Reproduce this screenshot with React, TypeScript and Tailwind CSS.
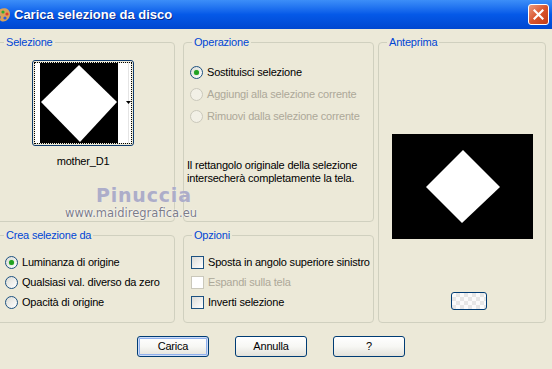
import React from "react";

type Opt = { checked?: boolean; disabled?: boolean };

function Radio({ checked, disabled }: Opt) {
  return (
    <span
      className={`flex h-[13px] w-[13px] shrink-0 items-center justify-center rounded-full border ${
        disabled ? "border-[#CAC8BB] bg-[#F2F0E6]" : "border-[#1C5180] bg-gradient-to-br from-[#DCDCD6] to-white"
      }`}
    >
      {checked && <span className="h-[5px] w-[5px] rounded-full bg-[#21A121] shadow-[0_0_1px_#5FCB5F]" />}
    </span>
  );
}

function Check({ disabled }: Opt) {
  return (
    <span
      className={`h-[13px] w-[13px] shrink-0 border ${
        disabled ? "border-[#CAC8BB] bg-white" : "border-[#1C5180] bg-gradient-to-br from-[#DCDCD7] to-white"
      }`}
    />
  );
}

function Group({ title, className, children }: { title: string; className: string; children: React.ReactNode }) {
  return (
    <fieldset className={`rounded-[4px] border border-[#D0D0BF] ${className}`}>
      <legend className="ml-[8px] px-[2px] text-[11px] leading-[13px] text-[#0046D5]">{title}</legend>
      {children}
    </fieldset>
  );
}

function Btn({ label, main }: { label: string; main?: boolean }) {
  return (
    <button
      type="button"
      className={`flex h-[21px] w-[72px] items-center justify-center rounded-[3px] border border-[#003C74] bg-gradient-to-b from-white via-[#F7F7F4] to-[#E3E2DA] text-[11px] text-black ${
        main ? "shadow-[inset_0_0_0_1px_#CEDCF7,inset_0_0_0_2px_#90B0EC]" : ""
      }`}
    >
      {label}
    </button>
  );
}

export default function App() {
  return (
    <div className="relative h-[369px] w-[552px] overflow-hidden bg-[#ECE9D8] font-['Liberation_Sans',Arial,sans-serif] text-[11px] tracking-[-0.2px] text-black">
      {/* title bar */}
      <div className="flex h-[29px] items-center bg-gradient-to-b from-[#3C8EF8] via-[#0559E8] to-[#0047D0]">
        <svg width="14" height="18" viewBox="0 0 14 18" className="ml-[-3px] shrink-0">
          <path d="M2 4 C6 1 13 2 13 8 C13 13 8 17 4 15 C1 13 6 11 2 9 Z" fill="#D9A25A" />
          <circle cx="6" cy="6" r="1.6" fill="#2FA82F" />
          <circle cx="10" cy="8" r="1.6" fill="#E13B2A" />
          <circle cx="8" cy="12" r="1.6" fill="#2A5BE0" />
        </svg>
        <div className="ml-[3px] text-[13px] font-bold tracking-[0px] text-white [text-shadow:1px_1px_0_#0A2A8A]">
          Carica selezione da disco
        </div>
        <div className="ml-auto mr-[3px] flex h-[21px] w-[21px] items-center justify-center rounded-[3px] border border-white bg-gradient-to-br from-[#E99A7E] via-[#D9542C] to-[#C23C16]">
          <svg width="11" height="11" viewBox="0 0 11 11">
            <path d="M1.5 1.5 L9.5 9.5 M9.5 1.5 L1.5 9.5" stroke="white" strokeWidth="2.2" strokeLinecap="square" />
          </svg>
        </div>
      </div>

      {/* groups */}
      <div className="ml-[-5px] mt-[7px] flex">
        <div className="flex w-[180px] flex-col gap-[7px]">
          <Group title="Selezione" className="h-[186px]">
            <div className="ml-[36px] mt-[11px] flex w-[102px] flex-col items-center">
              <div className="h-[86px] w-[102px] rounded-[3px] border border-[#0E3B6E] p-[1px]">
                <div className="h-full w-full border border-dotted border-black">
                  <svg width="96" height="80" viewBox="0 0 96 80" className="block">
                    <rect width="96" height="80" fill="white" />
                    <rect x="5" y="0" width="78" height="80" fill="black" />
                    <polygon points="44,2 82,39 45,79 6,39" fill="white" />
                    <line x1="93.5" y1="0" x2="93.5" y2="80" stroke="#E4E4E4" />
                    <polygon points="91,38 96,38 93.5,41" fill="black" />
                  </svg>
                </div>
              </div>
              <div className="mt-[9px] leading-[13px]">mother_D1</div>
            </div>
          </Group>
          <Group title="Crea selezione da" className="h-[94px]">
            <div className="flex flex-col pl-[9px] pt-[10px]">
              {["Luminanza di origine", "Qualsiasi val. diverso da zero", "Opacità di origine"].map((t, i) => (
                <div key={t} className="flex h-[20px] items-center gap-[4px] whitespace-nowrap">
                  <Radio checked={i === 0} />
                  <span>{t}</span>
                </div>
              ))}
            </div>
          </Group>
        </div>

        <div className="ml-[8px] flex w-[191px] flex-col gap-[7px]">
          <Group title="Operazione" className="h-[186px]">
            <div className="flex flex-col pl-[6px] pt-[12px]">
              <div className="flex h-[22px] items-center gap-[4px] whitespace-nowrap">
                <Radio checked />
                <span>Sostituisci selezione</span>
              </div>
              <div className="flex h-[22px] items-center gap-[4px] whitespace-nowrap text-[#ACA899]">
                <Radio disabled />
                <span>Aggiungi alla selezione corrente</span>
              </div>
              <div className="flex h-[22px] items-center gap-[4px] whitespace-nowrap text-[#ACA899]">
                <Radio disabled />
                <span>Rimuovi dalla selezione corrente</span>
              </div>
              <p className="ml-[-3px] mt-[32px] whitespace-nowrap leading-[13px]">
                Il rettangolo originale della selezione
                <br />
                intersecherà completamente la tela.
              </p>
            </div>
          </Group>
          <Group title="Opzioni" className="h-[94px]">
            <div className="flex flex-col pl-[7px] pt-[10px]">
              <div className="flex h-[20px] items-center gap-[4px] whitespace-nowrap">
                <Check />
                <span>Sposta in angolo superiore sinistro</span>
              </div>
              <div className="flex h-[20px] items-center gap-[4px] whitespace-nowrap text-[#ACA899]">
                <Check disabled />
                <span>Espandi sulla tela</span>
              </div>
              <div className="flex h-[20px] items-center gap-[4px] whitespace-nowrap">
                <Check />
                <span>Inverti selezione</span>
              </div>
            </div>
          </Group>
        </div>

        <Group title="Anteprima" className="ml-[4px] h-[287px] w-[168px]">
          <div className="flex flex-col items-center">
            <svg width="141" height="105" viewBox="0 0 141 105" className="mt-[85px] block">
              <rect width="141" height="105" fill="black" />
              <polygon points="71,16 108,53 70,89 34,53" fill="white" />
            </svg>
            <div className="ml-[14px] mt-[53px] h-[18px] w-[36px] rounded-[3px] border border-[#003C74] bg-[linear-gradient(45deg,#E6E6E6_25%,transparent_25%,transparent_75%,#E6E6E6_75%),linear-gradient(45deg,#E6E6E6_25%,#FAFAFA_25%,#FAFAFA_75%,#E6E6E6_75%)] bg-[length:8px_8px] bg-[position:0_0,4px_4px]" />
          </div>
        </Group>
      </div>

      {/* buttons */}
      <div className="mt-[13px] flex gap-[26px] pl-[137px]">
        <Btn label="Carica" main />
        <Btn label="Annulla" />
        <Btn label="?" />
      </div>

      {/* watermark */}
      <div className="pointer-events-none absolute left-[96px] top-[183px] font-['DejaVu_Sans',sans-serif] text-[19px] font-bold leading-[24px] tracking-[0.8px] text-[#ADADC8] [text-shadow:0_0_1px_#E8E8F0]">
        Pinuccia
      </div>
      <div className="pointer-events-none absolute left-[65px] top-[206px] font-['DejaVu_Sans',sans-serif] text-[11.5px] leading-[14px] tracking-[0px] text-[#7C7C88] [text-shadow:0_0_2px_white,0_0_1px_white]">
        www.maidiregrafica.eu
      </div>
    </div>
  );
}
